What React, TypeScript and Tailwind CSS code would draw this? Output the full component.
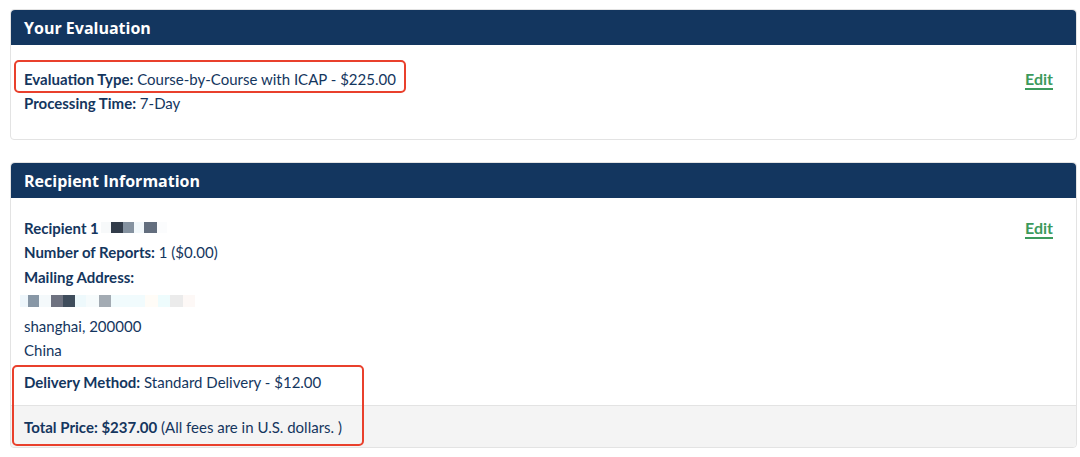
const navy = "text-[#14365e]";

function Blur({ items, className }: { items: [number, string][]; className?: string }) {
  return (
    <div className={`flex ${className ?? ""}`}>
      {items.map(([w, c], i) => (
        <div key={i} style={{ width: w, backgroundColor: c }} className="h-full" />
      ))}
    </div>
  );
}

function CardHeader({ title }: { title: string }) {
  return (
    <div className="flex h-[35px] items-center rounded-t-[4px] bg-[#13365f] px-[13px]">
      <h2 className="font-['Open_Sans',sans-serif] text-[16px] font-bold tracking-[0px] text-white">{title}</h2>
    </div>
  );
}

function Edit() {
  return (
    <a href="#" className="font-['Lato',sans-serif] text-[16px] font-bold text-[#3c9a5c] underline decoration-[1.5px] underline-offset-[3px]">
      Edit
    </a>
  );
}

export default function App() {
  return (
    <div className="min-h-[457px] bg-white pl-[10px] pr-[3px] pt-[9px] font-['Lato',sans-serif]">
      <section className="rounded-[4px] border border-[#e3e3e3]">
        <CardHeader title="Your Evaluation" />
        <div className={`relative flex justify-between pl-[13px] pr-[23px] pb-[24px] pt-[22px] text-[15px] leading-[24px] ${navy}`}>
          <div>
            <p>
              <b>Evaluation Type:</b> Course-by-Course with ICAP - $225.00
            </p>
            <p>
              <b>Processing Time:</b> 7-Day
            </p>
          </div>
          <div>
            <Edit />
          </div>
          <div className="pointer-events-none absolute left-[3px] top-[15px] h-[33px] w-[392px] rounded-[5px] border-2 border-[#e9402c]" />
        </div>
      </section>

      <section className="mt-[22px] rounded-[4px] border border-[#e3e3e3]">
        <CardHeader title="Recipient Information" />
        <div className={`relative text-[15px] leading-[24.4px] ${navy}`}>
          <div className="flex justify-between pl-[13px] pr-[23px] pt-[18px]">
            <div>
              <div className="flex items-center">
                <b>Recipient 1</b>
                <Blur
                  className="ml-[2px] mt-[-2px] h-[11px]"
                  items={[
                    [10, "#f7f9fa"],
                    [12, "#323c4a"],
                    [11, "#8592a0"],
                    [10, "#f2f8fb"],
                    [13, "#636e7e"],
                    [10, "#fbfcfd"],
                  ]}
                />
              </div>
              <p>
                <b>Number of Reports:</b> 1 ($0.00)
              </p>
              <p>
                <b>Mailing Address:</b>
              </p>
              <div className="flex h-[24.4px] items-center">
                <Blur
                  className="ml-[-4px] h-[12px]"
                  items={[
                    [8, "#eef6fb"],
                    [11, "#8897a6"],
                    [12, "#f4f9fb"],
                    [12, "#6e7280"],
                    [12, "#3f4d5c"],
                    [11, "#eef9fc"],
                    [13, "#f6fbfc"],
                    [12, "#a3abb3"],
                    [34, "#f1fbfd"],
                    [13, "#fffcf7"],
                    [12, "#eefcfd"],
                    [13, "#ebebeb"],
                    [12, "#fdf8f6"],
                  ]}
                />
              </div>
              <p>shanghai, 200000</p>
              <p>China</p>
            </div>
            <div>
              <Edit />
            </div>
          </div>
          <p className="px-[13px] pb-[10px] pt-[8px]">
            <b>Delivery Method:</b> Standard Delivery - $12.00
          </p>
          <p className="rounded-b-[4px] border-t border-[#e3e3e3] bg-[#f4f4f4] px-[13px] pb-[8px] pt-[9px]">
            <b>Total Price: $237.00</b> (All fees are in U.S. dollars. )
          </p>
          <div className="pointer-events-none absolute bottom-[1px] left-[1px] h-[81px] w-[352px] rounded-[5px] border-2 border-[#e9402c]" />
        </div>
      </section>
    </div>
  );
}
